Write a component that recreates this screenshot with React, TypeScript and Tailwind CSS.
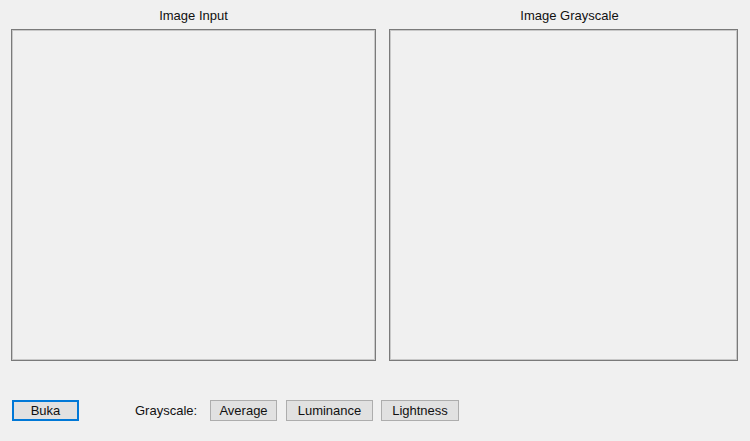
import React from "react";

const font = { fontFamily: '"Liberation Sans", Arial, sans-serif' };

export default function App() {
  return (
    <div
      className="w-[750px] h-[441px] bg-[#f0f0f0] text-[13px] leading-[15px] text-[#111] overflow-hidden flex flex-col"
      style={font}
    >
      <div className="flex pl-[11px] pr-[12px] gap-[13px]">
        <div className="w-[366px] flex flex-col">
          <div className="h-[29px] pt-[8px] text-center">Image Input</div>
          <div className="h-[332px] border border-[#7a7a7a] shadow-[inset_0_0_0_1px_#c8c8c8]" />
        </div>
        <div className="w-[350px] flex flex-col">
          <div className="h-[29px] pt-[8px] text-center pl-[12px]">Image Grayscale</div>
          <div className="h-[332px] border border-[#7a7a7a] shadow-[inset_0_0_0_1px_#c8c8c8]" />
        </div>
      </div>
      <div className="flex items-center mt-[39px] pl-[12px]">
        <button className="w-[67px] h-[21px] border-2 border-[#0078d7] bg-[#e1e1e1] flex items-center justify-center">
          Buka
        </button>
        <span className="ml-[56px] w-[75px]">Grayscale:</span>
        <button className="w-[67px] h-[21px] border border-[#adadad] bg-[#e1e1e1] flex items-center justify-center">
          Average
        </button>
        <button className="ml-[9px] w-[87px] h-[21px] border border-[#adadad] bg-[#e1e1e1] flex items-center justify-center">
          Luminance
        </button>
        <button className="ml-[8px] w-[78px] h-[21px] border border-[#adadad] bg-[#e1e1e1] flex items-center justify-center">
          Lightness
        </button>
      </div>
    </div>
  );
}
